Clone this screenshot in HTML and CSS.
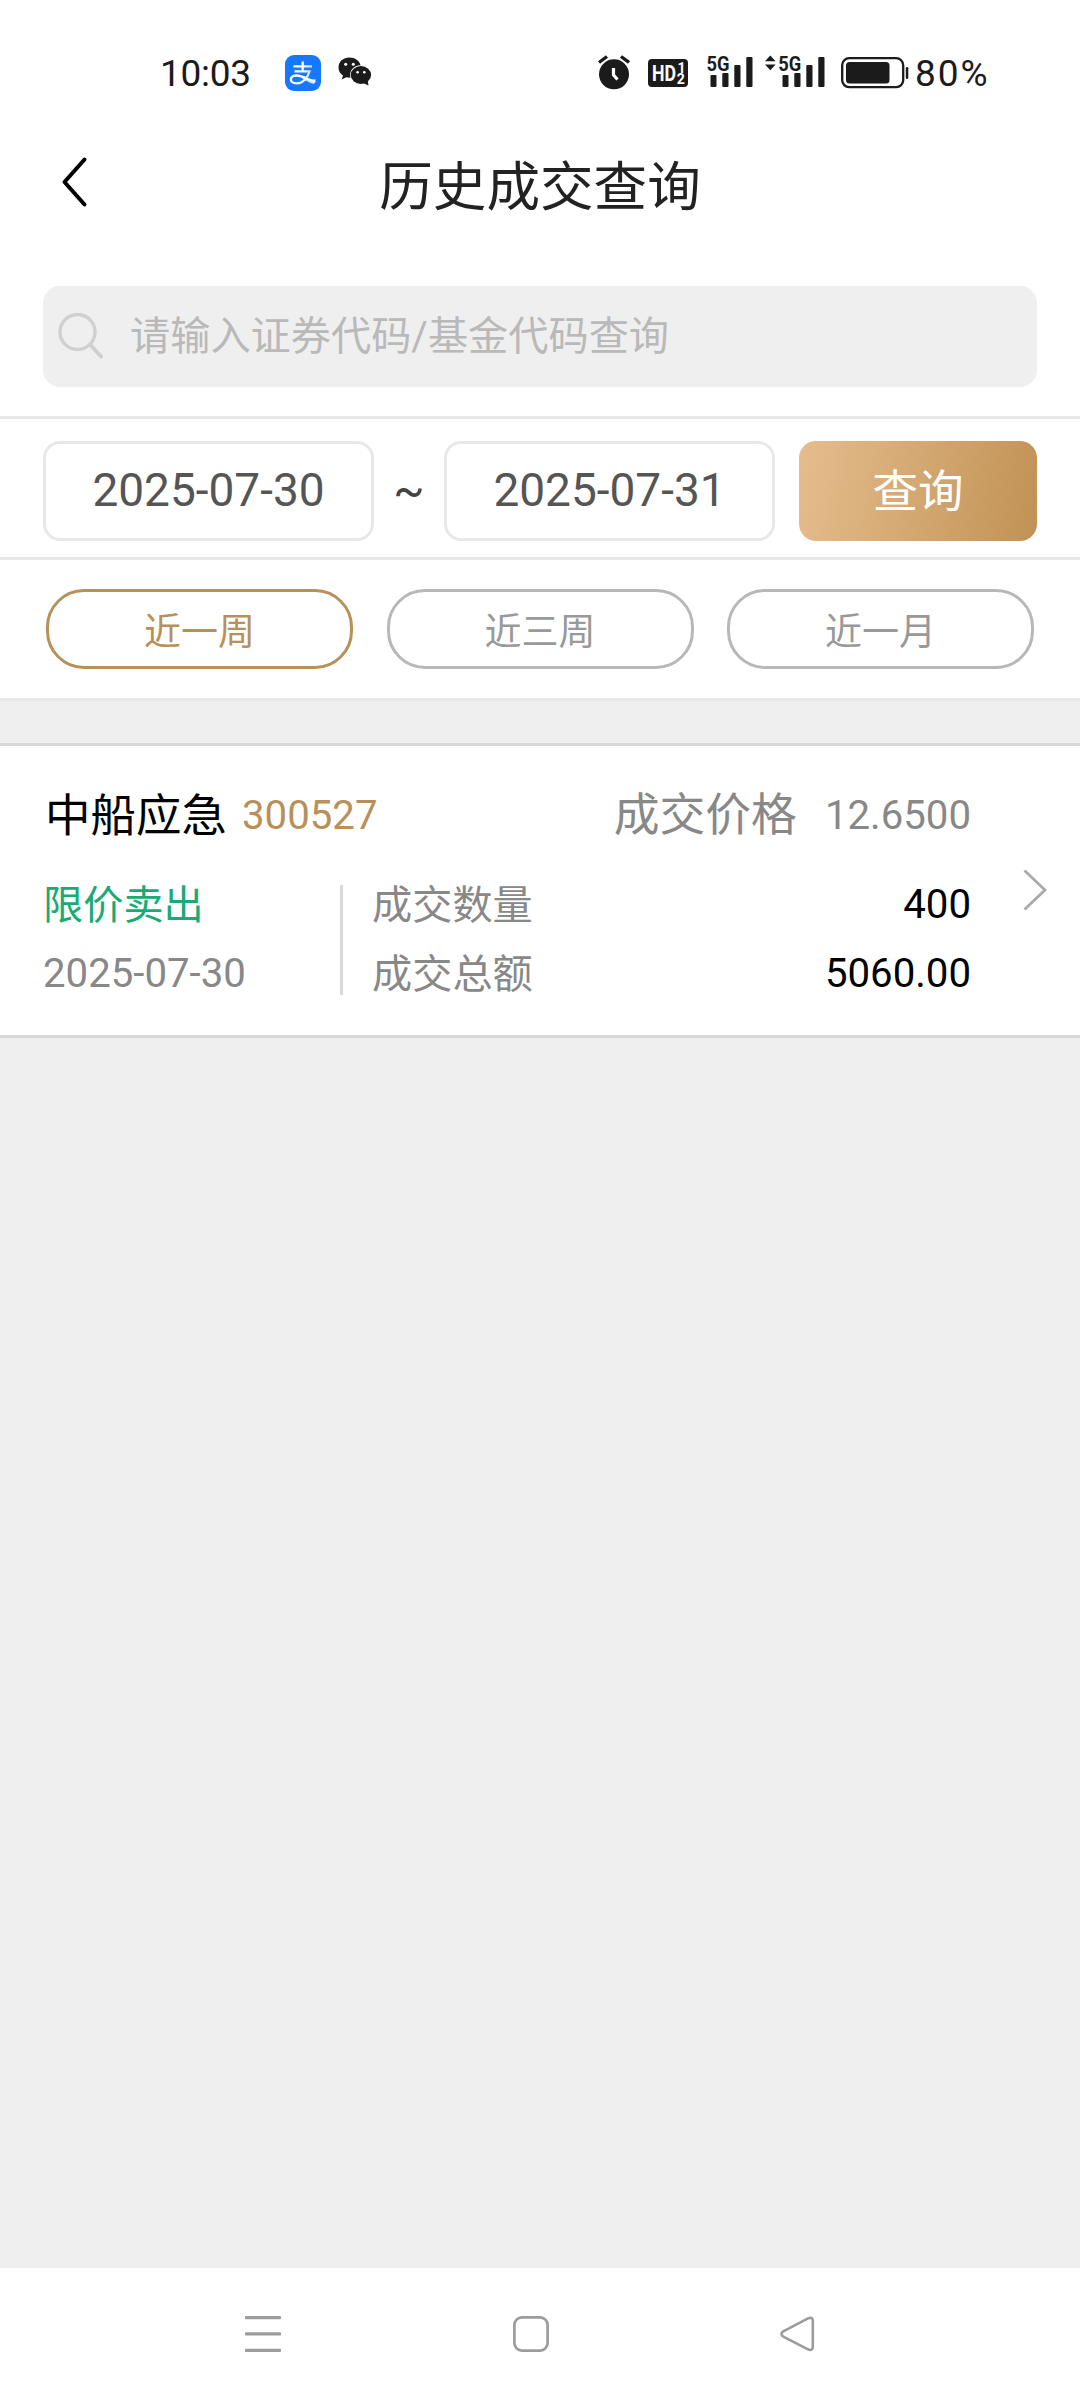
FILE: index.html
```html
<!DOCTYPE html>
<html lang="zh-CN">
<head>
<meta charset="utf-8">
<title>历史成交查询</title>
<link rel="stylesheet" href="styles.css">
</head>
<body>
<div class="screen">
  <header class="status">
    <span class="clock">10:03</span>
    <svg class="alipay" width="36" height="36" viewBox="0 0 36 36">
      <defs><linearGradient id="tail" x1="0" x2="1"><stop offset="0.45" stop-color="#fff"/><stop offset="1" stop-color="#fff" stop-opacity="0.65"/></linearGradient></defs>
      <rect width="36" height="36" rx="9" fill="#1777fe"/>
      <path d="M8.500 11.300H27M17.700 6.500V16.300M9.500 16.300H24.500C23 22 18.500 28.300 11.500 28.300C4 28.300 4 20.500 11.500 20.500C17.500 20.500 23 24.500 30.500 27" fill="none" stroke="url(#tail)" stroke-width="2.300"/>
      <path d="M19 22C23 23.600 26 24.400 31 24.600L29 29C25 28.300 21 25.600 17 23.500Z" fill="#fff" opacity="0.75"/>
    </svg>
    <svg class="wechat" width="34" height="30" viewBox="0 0 34 30" fill="#1b1b1b">
      <path d="M11.500 0.500C5 0.500 0.500 4.800 0.500 10.500C0.500 14 2.300 16.700 5 18.500L3.700 22.500L8.400 20.200C10 20.600 11 20.700 12.500 20.600C10.500 14 16 8.200 22.500 8.300C21.500 3.600 17 0.500 11.500 0.500Z"/>
      <ellipse cx="22.900" cy="18" rx="10.200" ry="8.900"/>
      <path d="M25 26L30.500 28.500L29.500 23Z"/>
      <g fill="#fff"><circle cx="7.700" cy="7.300" r="1.500"/><circle cx="15.300" cy="7.300" r="1.500"/><circle cx="19.600" cy="15.300" r="1.300"/><circle cx="26.300" cy="15.300" r="1.300"/></g>
    </svg>
    <svg class="alarm" width="32" height="35" viewBox="0 0 32 35">
      <circle cx="16" cy="19.300" r="15" fill="#1b1b1b"/>
      <path d="M1 7.500L9 1.500M31 7.500L23 1.500" stroke="#1b1b1b" stroke-width="3.400"/>
      <path d="M15.500 13V20L19.500 24.500" fill="none" stroke="#fff" stroke-width="3.200"/>
    </svg>
    <svg class="hd" width="40" height="28" viewBox="0 0 40 28">
      <rect width="40" height="28" rx="4" fill="#1b1b1b"/>
      <text x="4" y="21.500" class="hd-text" textLength="24" lengthAdjust="spacingAndGlyphs">HD</text>
      <text x="29.500" y="13.500" class="hd-sim">1</text>
      <text x="28.800" y="24.800" class="hd-sim">2</text>
    </svg>
    <svg class="signal" width="49" height="42" viewBox="-2 -8 49 42">
      <text x="-0.500" y="15.500" class="net" textLength="23" lengthAdjust="spacingAndGlyphs">5G</text>
      <g fill="#1b1b1b"><rect x="3.500" y="20" width="6" height="12" rx="1"/><rect x="15.300" y="18" width="6.200" height="14" rx="1"/><rect x="27.300" y="10" width="6.200" height="22" rx="1"/><rect x="39.300" y="2" width="6.200" height="30" rx="1"/></g>
    </svg>
    <svg class="signal-data" width="60" height="42" viewBox="0 -8 60 42">
      <path d="M0 6.200L5.300 0.500L10.600 6.200ZM0 9.500L5.300 15.200L10.600 9.500Z" fill="#1b1b1b"/>
      <text x="13.300" y="15.500" class="net" textLength="23" lengthAdjust="spacingAndGlyphs">5G</text>
      <g fill="#1b1b1b"><rect x="17.500" y="20" width="6" height="12" rx="1"/><rect x="29.300" y="18" width="6.200" height="14" rx="1"/><rect x="41.300" y="10" width="6.200" height="22" rx="1"/><rect x="53.300" y="2" width="6.200" height="30" rx="1"/></g>
    </svg>
    <svg class="battery" width="68" height="32" viewBox="0 0 68 32">
      <rect x="1.200" y="1.200" width="61" height="29" rx="7" fill="none" stroke="#1b1b1b" stroke-width="2.300"/>
      <rect x="5" y="5" width="43.500" height="21.500" rx="3.500" fill="#1b1b1b"/>
      <rect x="64.800" y="10" width="2.500" height="12" rx="1.200" fill="#1b1b1b"/>
    </svg>
    <span class="percent">80%</span>
  </header>

  <div class="titlebar">
    <svg class="back" width="30" height="52" viewBox="0 0 30 52"><path d="M26.500 3.500L6.500 26L26.500 48.500" fill="none" stroke="#000" stroke-width="4" stroke-linecap="round" stroke-linejoin="round"/></svg>
    <h1 class="title">历史成交查询</h1>
  </div>

  <div class="search-wrap">
    <div class="search">
      <svg width="46" height="48" viewBox="0 0 46 48" fill="none" stroke="#d0d0d0" stroke-width="3.400"><circle cx="20.500" cy="19" r="17.500"/><path d="M33.500 32L44 43.500" stroke-width="4" stroke-linecap="round"/></svg>
      <span class="placeholder">请输入证券代码/基金代码查询</span>
    </div>
  </div>

  <div class="range">
    <div class="date">2025-07-30</div>
    <span class="tilde">~</span>
    <div class="date">2025-07-31</div>
    <div class="query">查询</div>
  </div>

  <div class="periods">
    <div class="period active">近一周</div>
    <div class="period">近三周</div>
    <div class="period">近一月</div>
  </div>

  <main class="results">
    <article class="deal">
      <div class="deal-body">
        <div class="deal-head">
          <span class="name">中船应急</span><span class="code">300527</span>
          <span class="price-label">成交价格</span><span class="price">12.6500</span>
        </div>
        <div class="deal-info">
          <div class="side"><span class="sell">限价卖出</span><span>2025-07-30</span></div>
          <div class="figures">
            <div class="figure"><span class="label">成交数量</span><span class="num">400</span></div>
            <div class="figure"><span class="label">成交总额</span><span class="num">5060.00</span></div>
          </div>
        </div>
      </div>
      <svg class="more" width="26" height="44" viewBox="0 0 26 44"><path d="M2.500 2.500L23 22L2.500 41.500" fill="none" stroke="#aaa" stroke-width="2.800"/></svg>
    </article>
  </main>

  <nav class="nav">
    <svg width="36" height="36" viewBox="0 0 36 36" fill="#9c9c9c"><rect width="36" height="3.300" rx="1"/><rect y="16.300" width="36" height="3.300" rx="1"/><rect y="32.700" width="36" height="3.300" rx="1"/></svg>
    <svg width="36" height="36" viewBox="0 0 36 36"><rect x="1.400" y="1.400" width="33.200" height="33.200" rx="7.500" fill="none" stroke="#9c9c9c" stroke-width="2.700"/></svg>
    <svg width="36" height="36" viewBox="0 0 36 36"><path d="M28.500 2.200L2.800 15.700Q0.200 18 2.800 20.300L28.500 33.600Q32.800 35 32.800 31V4.800Q32.800 0.800 28.500 2.200Z" fill="none" stroke="#9c9c9c" stroke-width="2.600" stroke-linejoin="round"/></svg>
  </nav>
</div>
</body>
</html>
```
FILE: styles.css
```css
* { box-sizing: border-box; }
body { margin: 0; background: #fff; font-family: Roboto, "Noto Sans CJK SC", sans-serif; }
svg { display: block; flex: none; }
.screen { width: 1080px; height: 2400px; display: flex; flex-direction: column; background: #fff; overflow: hidden; }

.status { height: 136px; padding: 55px 0 0 160px; display: flex; align-items: flex-start; color: #1b1b1b; }
.clock, .percent { font-size: 37px; line-height: 37px; white-space: nowrap; }
.clock { width: 125px; letter-spacing: -0.3px; }
.wechat { margin: 2px 0 0 17px; }
.alarm { margin-left: 226px; }
.hd { margin: 4px 0 0 18px; }
.hd-text { font: 700 22px Roboto, sans-serif; fill: #fff; }
.hd-sim { font: 700 14px Roboto, sans-serif; fill: #fff; }
.signal { margin: -8px 0 0 17px; }
.net { font: 700 21px Roboto, sans-serif; fill: #1b1b1b; }
.signal-data { margin: -8px 0 0 11px; }
.battery { margin: 2px 0 0 16px; }
.percent { margin-left: 6px; letter-spacing: 2px; }

.titlebar { height: 150px; display: grid; grid-template-columns: 100px 1fr 100px; }
.back { margin: 20px 0 0 58px; }
.title { margin: 12px 0 0; font-size: 53.600px; line-height: 80px; font-weight: 400; color: #222; text-align: center; }

.search-wrap { height: 133px; padding: 0 43px; border-bottom: 3px solid #e8e8e8; }
.search { height: 101px; border-radius: 17px; background: #efefef; display: flex; align-items: center; padding-left: 14px; color: #b9b9b9; }
.placeholder { margin-left: 27px; font-size: 40.200px; line-height: 60px; }

.range { height: 141px; padding: 22px 43px 0; display: flex; border-bottom: 3px solid #e8e8e8; }
.date { width: 331px; height: 100px; border: 3px solid #e8e8e8; border-radius: 17px; font-size: 46px; line-height: 92px; text-align: center; color: #555; }
.tilde { width: 70px; text-align: center; font-size: 46px; line-height: 99px; color: #444; }
.query { width: 238px; height: 100px; margin-left: auto; border-radius: 17px; background: linear-gradient(100deg, #e5bd8d, #c19255); color: #fff; font-size: 45.500px; line-height: 103px; text-align: center; }

.periods { height: 141px; padding: 29px 46px 0; display: flex; justify-content: space-between; border-bottom: 3px solid #e8e8e8; }
.period { width: 307px; height: 80px; border: 3px solid #b8b8b8; border-radius: 38px; font-size: 37px; line-height: 81px; text-align: center; color: #999; }
.active { border-color: #b8905a; color: #b8905a; }

.results { flex: 1; padding-top: 42px; background: #efefef; }
.deal { height: 295px; background: #fff; border: solid #d8d8d8; border-width: 3px 0; padding-left: 43px; display: flex; font-size: 40.200px; color: #888; }
.deal-body { width: 928px; padding-top: 38px; }
.deal-head { display: flex; align-items: baseline; height: 92px; line-height: 60px; }
.name { font-size: 45.500px; color: #000; padding-left: 2px; transform: translateY(3px); }
.code { margin-left: 15px; color: #b8905a; }
.price-label { margin-left: auto; font-size: 45.800px; transform: translateY(2px); }
.price { margin-left: 28px; }
.deal-info { display: flex; margin-top: -6px; }
.side { width: 297px; height: 138px; display: flex; flex-direction: column; line-height: 69px; }
.sell { color: #18ab73; }
.sell, .label { transform: translateY(1px); }
.label { display: block; }
.figures { position: relative; flex: 1; padding-left: 32px; }
.figures::before { content: ""; position: absolute; left: 0; top: 15px; width: 3px; height: 110px; background: #d8d8d8; }
.figure { display: flex; justify-content: space-between; height: 69px; line-height: 69px; }
.num { color: #000; }
.more { margin: 122px 0 0 51px; }

.nav { height: 132px; padding: 48px 264px 0 245px; display: flex; justify-content: space-between; }
```
